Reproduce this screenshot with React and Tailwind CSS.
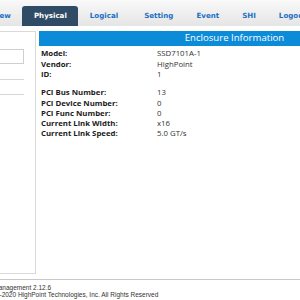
import React from 'react';

const tabs = ["Overview", "Physical", "Logical", "Setting", "Event", "SHI", "Logout"];

const infoRows = [
  ["Model:", "SSD7101A-1"],
  ["Vendor:", "HighPoint"],
  ["ID:", "1"],
];

const pciRows = [
  ["PCI Bus Number:", "13"],
  ["PCI Device Number:", "0"],
  ["PCI Func Number:", "0"],
  ["Current Link Width:", "x16"],
  ["Current Link Speed:", "5.0 GT/s"],
];

const Row = ({ label, value }) => (
  <div className="flex items-center h-[10.3px]">
    <span className="w-[116px] font-bold text-[#1a1a1a]">{label}</span>
    <span className="text-[#333]">{value}</span>
  </div>
);

const App = () => {
  return (
    <div className="w-[300px] h-[300px] overflow-hidden bg-white font-['Open_Sans',sans-serif]">
      <div className="w-[500px] -ml-[60px]">
        {/* top tabs */}
        <div className="h-[26px] bg-gradient-to-b from-[#f9f9f9] to-[#e5e5e5] flex items-end pl-[22px] font-['DejaVu_Sans',sans-serif] text-[7.1px] font-bold">
          {tabs.map((t) => (
            <div
              key={t}
              className={
                t === "Physical"
                  ? "h-[20px] px-[11.5px] flex items-center rounded-t-[3px] bg-[#2f4b65] text-white"
                  : t === "Logical"
                  ? "h-[20px] pl-[11.5px] pr-[14.5px] flex items-center text-[#1b6fc2]"
                  : "h-[20px] px-[11.5px] flex items-center text-[#1b6fc2]"
              }
            >
              {t}
            </div>
          ))}
        </div>

        {/* content */}
        <div className="mt-[5px] flex px-[10px] h-[243px]">
          <div className="w-[86px] border border-[#d9d9d9] pt-[17px] pl-[12px]">
            <div className="w-[61px] h-[15px] border border-[#cfcfcf]"></div>
            <div className="w-[61px] h-[16px] border-b border-[#d6d6d6]"></div>
            <div className="w-[61px] h-[15px] border-b border-[#d6d6d6]"></div>
          </div>

          <div className="ml-[3px] flex-1">
            <div className="h-[15px] bg-[#0b8bd8] text-white text-[9.6px] flex items-center justify-center">
              Enclosure Information
            </div>
            <div className="pt-[3px] pl-[2px] text-[7.8px]">
              {infoRows.map(([l, v]) => (
                <Row key={l} label={l} value={v} />
              ))}
              <div className="h-[8px]"></div>
              {pciRows.map(([l, v]) => (
                <Row key={l} label={l} value={v} />
              ))}
            </div>
          </div>
        </div>

        {/* footer */}
        <div className="mt-[5px] border-t border-[#c8c8c8] pl-[6px] pt-[4px] font-['Liberation_Sans',sans-serif] text-[6.5px] leading-[7px] text-[#333]">
          <p>HighPoint RAID Management 2.12.6</p>
          <p>Copyright (c) 2005-2020 HighPoint Technologies, Inc. All Rights Reserved</p>
        </div>
      </div>
    </div>
  );
};

export default App;
